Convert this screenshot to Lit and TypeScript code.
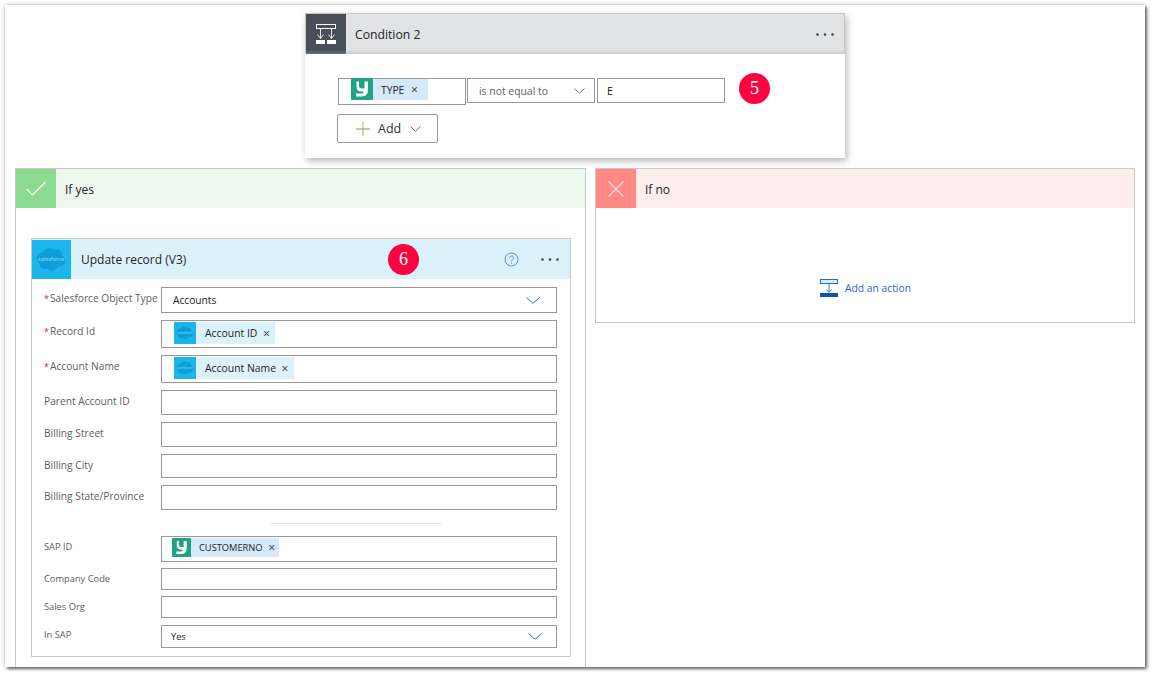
import { LitElement, html, css } from "lit";
import { customElement } from "lit/decorators.js";

const chevron = (color: string, w = 14, h = 7) => html`<svg class="chev" width="${w}" height="${h}" viewBox="0 0 ${w} ${h}"><path d="M.5 .5 L${w / 2} ${h - 0.7} L${w - 0.5} .5" fill="none" stroke="${color}" stroke-width="1"/></svg>`;

const sfIcon = (size: number) => html`<svg width="${size}" height="${size}" viewBox="0 0 40 40" class="ico">
  <rect width="40" height="40" fill="#1ab5ea"/>
  <g fill="#0d9ddb">
    <circle cx="11.500" cy="19" r="6.500"/><circle cx="17.500" cy="15" r="6.500"/><circle cx="25" cy="15.500" r="6"/>
    <circle cx="28" cy="21.500" r="6"/><circle cx="20" cy="25" r="6.500"/><circle cx="13" cy="24" r="5.500"/>
  </g>
  <text x="19.500" y="21.500" text-anchor="middle" class="sftext">salesforce</text>
</svg>`;

const yIcon = (size: number) => html`<svg width="${size}" height="${size}" viewBox="0 0 22 22" class="ico">
  <rect width="22" height="22" rx="1" fill="#1fa384"/>
  <path d="M5.500 3.500H8V7.500Q8 10.500 11 10.500H13.500V3.500H17V11.500Q17 18.500 10.500 18.500H5V15.500H10.500Q12.500 15.500 13 13.500H10.500Q5.500 13.500 5.500 8.500Z" fill="#fff"/>
</svg>`;

const dots = html`<svg width="18" height="3" viewBox="0 0 18 3" class="ico"><circle cx="1.500" cy="1.500" r="1.200" fill="#3b3a39"/><circle cx="9" cy="1.500" r="1.200" fill="#3b3a39"/><circle cx="16.500" cy="1.500" r="1.200" fill="#3b3a39"/></svg>`;

interface Chip { kind: "sf" | "y"; text: string }
interface Row { label: string; req?: boolean; h: number; gap: number; small?: boolean; tight?: boolean; value?: string; chip?: Chip; select?: boolean; rule?: boolean }

const rows: Row[] = [
  { label: "Salesforce Object Type", req: true, h: 26, gap: 8, value: "Accounts", select: true },
  { label: "Record Id", req: true, h: 28, gap: 7, chip: { kind: "sf", text: "Account ID" } },
  { label: "Account Name", req: true, h: 28, gap: 7, chip: { kind: "sf", text: "Account Name" } },
  { label: "Parent Account ID", h: 25, gap: 7 },
  { label: "Billing Street", h: 25, gap: 7 },
  { label: "Billing City", h: 24, gap: 7 },
  { label: "Billing State/Province", h: 25, gap: 7 },
  { label: "SAP ID", h: 26, gap: 0, small: true, rule: true, chip: { kind: "y", text: "CUSTOMERNO" } },
  { label: "Company Code", h: 22, gap: 6, small: true },
  { label: "Sales Org", h: 22, gap: 6, small: true },
  { label: "In SAP", h: 23, gap: 7, small: true, tight: true, value: "Yes", select: true },
];

@customElement("app-root")
export class AppRoot extends LitElement {
  static styles = css`
    :host { display: block; width: 1154px; height: 676px; background: #fff; overflow: hidden; font-family: "Open Sans", "Noto Sans", sans-serif; color: #252423; padding: 5px 9px 9px 5px; box-sizing: border-box; }
    * { box-sizing: border-box; }
    .frame { width: 1140px; height: 662px; background: #fff; box-shadow: 0 0 4px rgba(0,0,0,.28), 2px 2px 3px rgba(0,0,0,.55); display: flex; flex-direction: column; align-items: stretch; overflow: hidden; }
    .ico { display: block; flex: none; }
    .chev { display: block; flex: none; }
    .sftext { font-family: "Open Sans", sans-serif; font-size: 5.500px; font-weight: 600; fill: #7fd2f2; }

    .cond { width: 540px; margin: 8px 0 0 300px; flex: none; box-shadow: 2px 3px 7px rgba(0,0,0,.28); }
    .cond-head { height: 41px; display: flex; align-items: center; background: #e1e3e5; border: 1px solid #c8c6c4; border-bottom: none; box-shadow: inset 0 -4px 4px -3px rgba(0,0,0,.16); }
    .cond-icon { width: 40px; height: 40px; background: #484f58; display: flex; align-items: center; justify-content: center; box-shadow: inset 0 -4px 4px -3px rgba(255,255,255,.3); }
    .cond-title { margin-left: 9px; font-size: 12.200px; flex: 1; color: #252423; }
    .more { margin-right: 10px; }
    .cond-body { height: 104px; background: #fff; padding: 24px 0 0 33px; }
    .crow { display: flex; align-items: flex-start; }
    .box { border: 1px solid #989898; background: #fff; display: flex; align-items: center; }
    .c1 { width: 128px; height: 27px; padding: 0 0 5px 12px; }
    .c2 { width: 128px; height: 25px; margin-left: 1px; padding: 0 9px 0 11px; justify-content: space-between; font-size: 10.400px; color: #605e5c; }
    .c3 { width: 128px; height: 25px; margin-left: 2px; padding: 0 9px; font-size: 10.500px; color: #111; }
    .badge { width: 31px; height: 31px; border-radius: 50%; background: #ff0040; color: #fff; font-family: "Liberation Serif", serif; font-size: 18px; display: flex; align-items: center; justify-content: center; flex: none; }
    .b5 { margin: -5px 0 0 14px; }
    .add { width: 101px; height: 29px; margin: 9px 0 0 -1px; border: 1px solid #989898; border-radius: 2px; display: flex; align-items: center; padding-left: 18px; font-size: 12.500px; font-weight: 500; color: #323130; }
    .add span { margin: 0 9px 0 8px; }

    .chip { display: inline-flex; align-items: center; height: 22px; background: #dcf2fb; font-size: 10.400px; color: #252423; flex: none; }
    .chip .t { margin-left: 9px; }
    .chip .x { font-size: 12px; line-height: 1; margin: 0 4px 0 4px; padding-top: 2px; width: 10px; text-align: center; color: #333; }
    .chip.y { background: #d6e9fa; height: 21px; }
    .chip.y .t { margin-left: 8px; font-size: 10.300px; padding-top: 1px; }
    .chip.y .x { margin: 0 9px 0 5px; }
    .chip.small { height: 19px; }
    .chip.small .t { font-size: 9.300px; padding-top: 0; }
    .chip.small .x { margin: 0 2px 0 4px; }

    .branches { display: flex; margin: 10px 0 0 10px; flex: 1; min-height: 0; align-items: flex-start; }
    .branch { border: 1px solid #c8c8c8; background: #fff; flex: none; }
    .yes { width: 571px; height: 520px; }
    .no { width: 540px; height: 155px; margin-left: 9px; display: flex; flex-direction: column; }
    .bhead { height: 39px; display: flex; align-items: center; font-size: 12px; }
    .blabel { padding-top: 1px; }
    .bhead .sq { width: 40px; height: 39px; display: flex; align-items: center; justify-content: center; margin-right: 9px; }
    .yes .bhead { background: #ecf7ee; }
    .yes .sq { background: #8bdc8f; }
    .no .bhead { background: #ffeded; }
    .no .sq { background: #ff8a85; }
    .noact { display: flex; align-items: center; justify-content: center; padding: 71px 0 0 1px; font-size: 10.300px; color: #2f63d8; gap: 7px; }

    .card { width: 540px; height: 419px; margin: 30px 0 0 15px; border: 1px solid #c8c8c8; background: #fff; }
    .chead { height: 40px; background: #dcf2fb; display: flex; align-items: center; font-size: 12px; }
    .chead .name { margin-left: 10px; width: 307px; }
    .b6 { margin-top: 1px; }
    .help { margin-left: 85px; }
    .more2 { margin-left: 22px; }
    .rows { padding: 0 13px 0 12px; }
    .row { display: grid; grid-template-columns: 117px 396px; }
    .lab { font-size: 10.200px; line-height: 22px; color: #605e5c; white-space: nowrap; }
    .lab.small { font-size: 9.300px; line-height: 22px; }
    .lab.tight { line-height: 20px; }
    .req { color: #e0103a; display: inline-block; width: 6px; font-size: 9px; }
    .field { border: 1px solid #989898; display: flex; align-items: center; padding: 0 16px 0 11px; justify-content: space-between; font-size: 10.200px; color: #252423; }
    .field.tiny { font-size: 9.200px; padding: 0 14px 0 9px; }
    .field.chips { justify-content: flex-start; padding: 0 0 2px 12px; }
    .field.ychips { padding: 0 0 4px 10px; }
    .rule { height: 1px; width: 170px; margin: 13px 0 12px 227px; background: #e0e0e0; }
  `;

  private chip(c: Chip, small = false) {
    const isY = c.kind === "y";
    return html`<span class="chip ${isY ? "y" : ""} ${small ? "small" : ""}">${isY ? yIcon(small ? 19 : 22) : sfIcon(22)}<span class="t">${c.text}</span><span class="x">×</span></span>`;
  }

  render() {
    return html`<div class="frame">
      <section class="cond">
        <div class="cond-head">
          <div class="cond-icon">
            <svg width="22" height="22" viewBox="0 0 22 22" class="ico">
              <rect x="1.500" y="1.500" width="19" height="4" fill="none" stroke="#fff"/>
              <path d="M5.500 5.500V15.500M2.500 11.500L5.500 15.500L8.500 11.500M16.500 5.500V15.500M13.500 11.500L16.500 15.500L19.500 11.500" fill="none" stroke="#e8e8e8" stroke-width="1"/>
              <rect x="1" y="17" width="9" height="4" fill="#fff"/><rect x="12" y="17" width="9" height="4" fill="#fff"/>
            </svg>
          </div>
          <div class="cond-title">Condition 2</div>
          <div class="more">${dots}</div>
        </div>
        <div class="cond-body">
          <div class="crow">
            <div class="box c1">${this.chip({ kind: "y", text: "TYPE" })}</div>
            <div class="box c2"><span>is not equal to</span>${chevron("#7a7876", 11, 6)}</div>
            <div class="box c3">E</div>
            <div class="badge b5">5</div>
          </div>
          <div class="add">
            <svg width="14" height="14" viewBox="0 0 14 14" class="ico"><path d="M0 7H14" stroke="#8a8886" stroke-width="1"/><path d="M7 0V14" stroke="#cf9a62" stroke-width="1"/></svg>
            <span>Add</span>${chevron("#7a7876", 11, 6)}
          </div>
        </div>
      </section>

      <div class="branches">
        <section class="branch yes">
          <div class="bhead">
            <div class="sq"><svg width="20" height="15" viewBox="0 0 20 15" class="ico"><path d="M0.500 8L6.500 14L19.500 1" fill="none" stroke="#fff" stroke-width="1.200"/></svg></div>
            <span class="blabel">If yes</span>
          </div>
          <div class="card">
            <div class="chead">
              ${sfIcon(39)}
              <div class="name">Update record (V3)</div>
              <div class="badge b6">6</div>
              <svg class="ico help" width="15" height="15" viewBox="0 0 15 15"><circle cx="7.500" cy="7.500" r="6.500" fill="none" stroke="#5b8def" stroke-width="1"/><path d="M5.500 5.800C5.500 3.500 9.700 3.500 9.700 5.800C9.700 7.300 7.600 7.300 7.600 9.200" fill="none" stroke="#5b8def"/><circle cx="7.600" cy="11" r=".7" fill="#5b8def"/></svg>
              <div class="more2">${dots}</div>
            </div>
            <div class="rows">
              ${rows.map((r) => html`
                ${r.rule ? html`<div class="rule"></div>` : ""}
                <div class="row" style="margin-top:${r.gap}px;height:${r.h}px">
                  <div class="lab ${r.small ? "small" : ""} ${r.tight ? "tight" : ""}">${r.req ? html`<span class="req">*</span>` : ""}${r.label}</div>
                  <div class="field ${r.small && r.value ? "tiny" : ""} ${r.chip ? "chips" : ""} ${r.chip?.kind === "y" ? "ychips" : ""}">
                    ${r.chip ? this.chip(r.chip, r.small) : ""}
                    ${r.value ? html`<span>${r.value}</span>` : ""}
                    ${r.select ? chevron("#2f6fe4") : ""}
                  </div>
                </div>`)}
            </div>
          </div>
        </section>
        <section class="branch no">
          <div class="bhead">
            <div class="sq"><svg width="16" height="16" viewBox="0 0 16 16" class="ico"><path d="M0.500 0.500L15.500 15.500M15.500 0.500L0.500 15.500" stroke="#ffe3e1" stroke-width="1.100"/></svg></div>
            <span class="blabel">If no</span>
          </div>
          <div class="noact">
            <svg width="18" height="18" viewBox="0 0 18 18" class="ico">
              <rect x=".5" y=".5" width="17" height="4" fill="#dbe8f6" stroke="#2a6bb8"/>
              <path d="M9 4.500V13M6.500 10.500L9 13.500L11.500 10.500" fill="none" stroke="#3f7cc4"/>
              <rect y="14" width="18" height="4" fill="#0b56a8"/>
            </svg>
            <span>Add an action</span>
          </div>
        </section>
      </div>
    </div>`;
  }
}
